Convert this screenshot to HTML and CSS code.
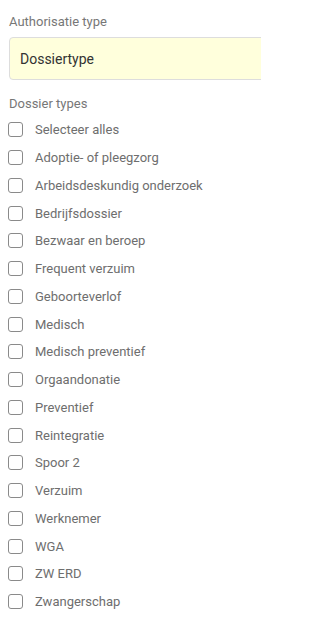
FILE: index.html
```html
<!DOCTYPE html>
<html lang="nl">
<head>
<meta charset="utf-8">
<title>Authorisatie</title>
<link rel="stylesheet" href="styles.css">
</head>
<body>
<div class="panel">
  <div class="field-label">Authorisatie type</div>
  <div class="select-box">Dossiertype</div>
  <div class="field-label section">Dossier types</div>
  <ul class="check-list">
    <li class="check-item"><span class="box"></span><span class="text">Selecteer alles</span></li>
    <li class="check-item"><span class="box"></span><span class="text">Adoptie- of pleegzorg</span></li>
    <li class="check-item"><span class="box"></span><span class="text">Arbeidsdeskundig onderzoek</span></li>
    <li class="check-item"><span class="box"></span><span class="text">Bedrijfsdossier</span></li>
    <li class="check-item"><span class="box"></span><span class="text">Bezwaar en beroep</span></li>
    <li class="check-item"><span class="box"></span><span class="text">Frequent verzuim</span></li>
    <li class="check-item"><span class="box"></span><span class="text">Geboorteverlof</span></li>
    <li class="check-item"><span class="box"></span><span class="text">Medisch</span></li>
    <li class="check-item"><span class="box"></span><span class="text">Medisch preventief</span></li>
    <li class="check-item"><span class="box"></span><span class="text">Orgaandonatie</span></li>
    <li class="check-item"><span class="box"></span><span class="text">Preventief</span></li>
    <li class="check-item"><span class="box"></span><span class="text">Reintegratie</span></li>
    <li class="check-item"><span class="box"></span><span class="text">Spoor 2</span></li>
    <li class="check-item"><span class="box"></span><span class="text">Verzuim</span></li>
    <li class="check-item"><span class="box"></span><span class="text">Werknemer</span></li>
    <li class="check-item"><span class="box"></span><span class="text">WGA</span></li>
    <li class="check-item"><span class="box"></span><span class="text">ZW ERD</span></li>
    <li class="check-item"><span class="box"></span><span class="text">Zwangerschap</span></li>
  </ul>
</div>
</body>
</html>
```
FILE: styles.css
```css
html, body {
  margin: 0;
  padding: 0;
  background: #ffffff;
  overflow: hidden;
}
body {
  font-family: Roboto, "Liberation Sans", sans-serif;
  width: 261px;
}
.panel {
  padding: 14px 0 0 9px;
  overflow: hidden;
}
.field-label {
  font-size: 13px;
  line-height: 16px;
  color: #777777;
}
.field-label.section {
  margin-top: 16px;
}
.select-box {
  margin-top: 7px;
  margin-right: -10px;
  height: 43px;
  box-sizing: border-box;
  border: 1px solid #dddddd;
  border-radius: 4px;
  background: #ffffdc;
  display: flex;
  align-items: center;
  padding-left: 10px;
  font-size: 14px;
  color: #333333;
}
.check-list {
  list-style: none;
  margin: 4px 0 0 0;
  padding: 0;
}
.check-item {
  height: 27.75px;
  display: flex;
  align-items: center;
}
.box {
  width: 15px;
  height: 15px;
  box-sizing: border-box;
  border: 1px solid #8a8a8a;
  border-radius: 3px;
  margin-left: -1px;
  flex: none;
}
.text {
  margin-left: 12px;
  font-size: 13px;
  color: #6e6e6e;
}
```
